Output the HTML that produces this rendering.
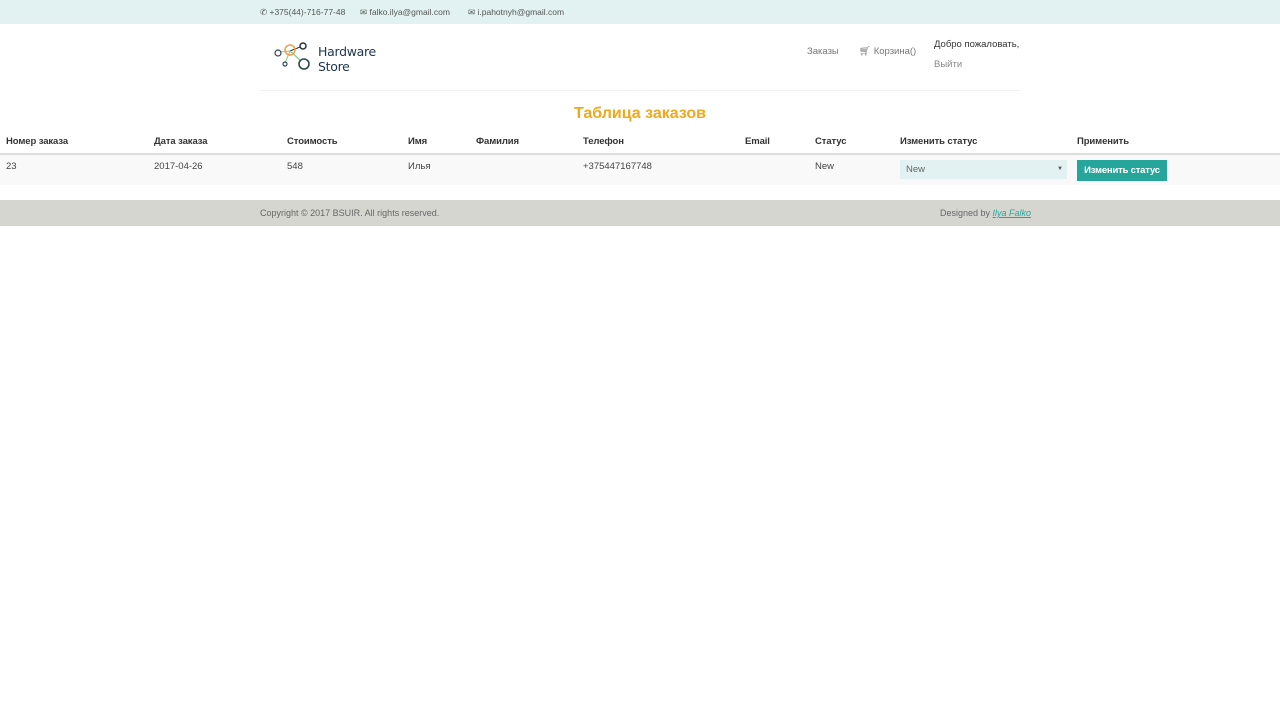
<!DOCTYPE html>
<html><head><meta charset="utf-8"><style>
*{margin:0;padding:0;box-sizing:border-box}
body{width:1280px;height:720px;background:#fff;font-family:"Liberation Sans",sans-serif;color:#333;position:relative;overflow:hidden}
.a{position:absolute;white-space:nowrap}
.top{position:absolute;left:0;top:0;width:1280px;height:24px;background:#e2f2f2}
.t9{font-size:8.5px;color:#555}
.h{font-size:9.5px;font-weight:bold;color:#333;letter-spacing:-0.1px}
.d{font-size:9.5px;color:#444}
</style></head><body>
<div class="top"></div>
<div class="a t9" style="left:260px;top:7px">&#9990; +375(44)-716-77-48</div>
<div class="a t9" style="left:360px;top:7px">&#9993; falko.ilya@gmail.com</div>
<div class="a t9" style="left:468px;top:7px">&#9993; i.pahotnyh@gmail.com</div>
<svg class="a" style="left:272px;top:40px" width="48" height="34" viewBox="0 0 48 34">
<line x1="8" y1="12" x2="18" y2="11" stroke="#8c8" stroke-width="1"/>
<line x1="18" y1="11" x2="28" y2="7" stroke="#333" stroke-width="1"/>
<line x1="18" y1="11" x2="28" y2="20" stroke="#8c8" stroke-width="1.2"/>
<line x1="18" y1="11" x2="13" y2="23" stroke="#8c8" stroke-width="1"/>
<circle cx="6" cy="13" r="3" fill="none" stroke="#345" stroke-width="1.2"/>
<circle cx="18" cy="10" r="5" fill="none" stroke="#e9a050" stroke-width="1.5"/>
<circle cx="31" cy="6" r="3" fill="none" stroke="#234" stroke-width="1.5"/>
<circle cx="13" cy="24" r="2" fill="none" stroke="#345" stroke-width="1.2"/>
<circle cx="32" cy="24" r="5" fill="none" stroke="#2a4a4a" stroke-width="1.6"/>
</svg>
<div class="a" style="left:318px;top:44px;font-size:12.5px;line-height:15px;color:#1f3550;font-family:'DejaVu Sans',sans-serif;letter-spacing:-0.3px">Hardware<br>Store</div>
<div class="a" style="left:807px;top:46px;font-size:9.5px;color:#777">Заказы</div>
<div class="a" style="left:859px;top:46px;font-size:9.5px;color:#777">&#128722;&#xFE0E; Корзина()</div>
<div class="a" style="left:934px;top:39px;font-size:9.5px;color:#333">Добро пожаловать,</div>
<div class="a" style="left:934px;top:59px;font-size:9.5px;color:#888">Выйти</div>
<div class="a" style="left:260px;top:90px;width:760px;height:1px;background:#f2f2f2"></div>
<div class="a" style="left:0;width:1280px;top:105px;text-align:center;font-size:16px;font-weight:bold;color:#f0a81c">Таблица заказов</div>
<div class="a h" style="left:6px;top:136px">Номер заказа</div>
<div class="a h" style="left:154px;top:136px">Дата заказа</div>
<div class="a h" style="left:287px;top:136px">Стоимость</div>
<div class="a h" style="left:408px;top:136px">Имя</div>
<div class="a h" style="left:476px;top:136px">Фамилия</div>
<div class="a h" style="left:583px;top:136px">Телефон</div>
<div class="a h" style="left:745px;top:136px">Email</div>
<div class="a h" style="left:815px;top:136px">Статус</div>
<div class="a h" style="left:900px;top:136px">Изменить статус</div>
<div class="a h" style="left:1077px;top:136px">Применить</div>
<div class="a" style="left:0;top:153px;width:1280px;height:2px;background:#ddd"></div>
<div class="a" style="left:0;top:155px;width:1280px;height:30px;background:#f9f9f9"></div>
<div class="a d" style="left:6px;top:161px">23</div>
<div class="a d" style="left:154px;top:161px">2017-04-26</div>
<div class="a d" style="left:287px;top:161px">548</div>
<div class="a d" style="left:408px;top:161px">Илья</div>
<div class="a d" style="left:583px;top:161px">+375447167748</div>
<div class="a d" style="left:815px;top:161px">New</div>
<div class="a" style="left:900px;top:160px;width:167px;height:19px;background:#e2f2f2"></div>
<div class="a" style="left:906px;top:164px;font-size:9.5px;color:#666">New</div>
<div class="a" style="left:1057px;top:166px;font-size:6px;color:#555">&#9660;</div>
<div class="a" style="left:1077px;top:160px;width:90px;height:21px;background:#26a69a;color:#fff;font-size:9.5px;font-weight:bold;text-align:center;line-height:21px;letter-spacing:-0.2px">Изменить статус</div>
<div class="a" style="left:0;top:200px;width:1280px;height:26px;background:#d6d6d0"></div>
<div class="a" style="left:260px;top:208px;font-size:9px;color:#666">Copyright © 2017 BSUIR. All rights reserved.</div>
<div class="a" style="left:940px;top:208px;font-size:9px;color:#666">Designed by <i style="color:#26a69a;text-decoration:underline">Ilya Falko</i></div>
</body></html>
